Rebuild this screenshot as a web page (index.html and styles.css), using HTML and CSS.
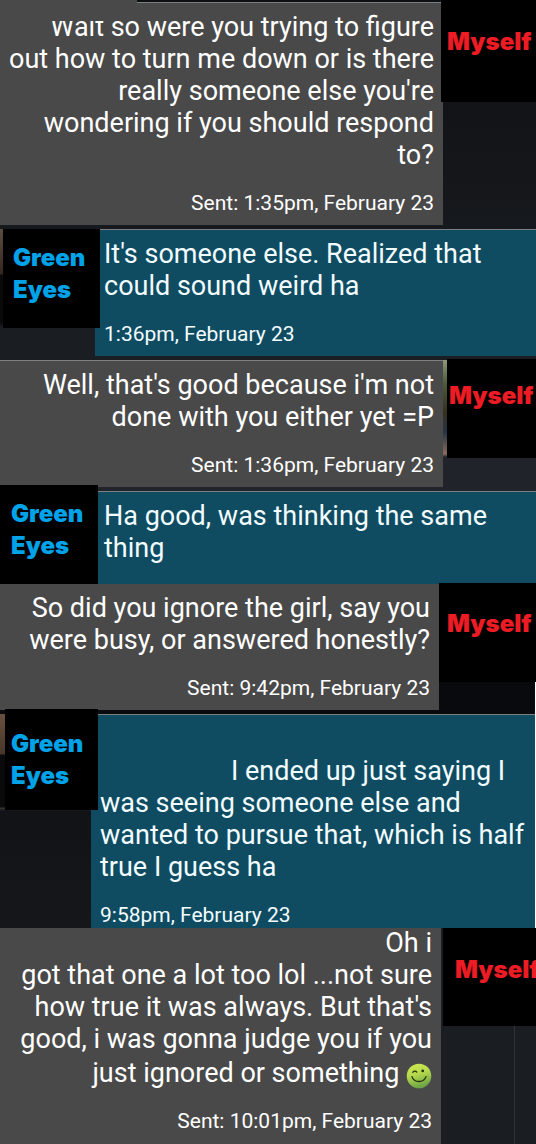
FILE: index.html
```html
<!DOCTYPE html>
<html lang="en">
<head>
<meta charset="utf-8">
<meta name="viewport" content="width=device-width, initial-scale=1">
<title>Conversation</title>
<link rel="stylesheet" href="styles.css">
</head>
<body>
<main class="thread">
  <article class="row sent first">
    <span class="patch"></span>
    <div class="bubble lined">
      <p class="text">Wait so were you trying to figure<br>out how to turn me down or is there<br>really someone else you're<br>wondering if you should respond<br>to?</p>
      <time class="time">Sent: 1:35pm, February 23</time>
    </div>
    <div class="side"><div class="avatar">Myself</div></div>
  </article>

  <article class="row received second">
    <div class="side photo"><div class="avatar">Green<br>Eyes</div></div>
    <div class="bubble lined">
      <p class="text">It's someone else. Realized that<br>could sound weird ha</p>
      <time class="time">1:36pm, February 23</time>
    </div>
  </article>

  <article class="row sent third">
    <div class="bubble lined">
      <p class="text">Well, that's good because i'm not<br>done with you either yet =P</p>
      <time class="time">Sent: 1:36pm, February 23</time>
    </div>
    <div class="side photo"><div class="avatar">Myself</div></div>
  </article>

  <article class="row received fourth">
    <div class="side"><div class="avatar">Green<br>Eyes</div></div>
    <div class="bubble lined">
      <p class="text">Ha good, was thinking the same<br>thing</p>
    </div>
  </article>

  <article class="row sent fifth">
    <div class="bubble">
      <p class="text">So did you ignore the girl, say you<br>were busy, or answered honestly?</p>
      <time class="time">Sent: 9:42pm, February 23</time>
    </div>
    <div class="side"><div class="avatar">Myself</div></div>
  </article>

  <article class="row received sixth">
    <div class="side photo"><div class="avatar">Green<br>Eyes</div></div>
    <div class="bubble lined">
      <p class="text">I ended up just saying I<br>was seeing someone else and<br>wanted to pursue that, which is half<br>true I guess ha</p>
      <time class="time">9:58pm, February 23</time>
    </div>
  </article>

  <article class="row sent seventh">
    <div class="bubble">
      <p class="text">Oh i<br>got that one a lot too lol ...not sure<br>how true it was always. But that's<br>good, i was gonna judge you if you<br>just ignored or something <svg class="wink" viewBox="0 0 26 26" role="img" aria-label="wink">
        <defs><linearGradient id="face" x1="0" y1="0" x2="0.3" y2="1"><stop offset="0" stop-color="#d3ea50"/><stop offset="0.5" stop-color="#b5d94d"/><stop offset="1" stop-color="#6fa544"/></linearGradient></defs>
        <circle cx="13" cy="13" r="12.3" fill="url(#face)"/>
        <path d="M6.8 9.2Q8.7 7.2 10.8 9" fill="none" stroke="#27330f" stroke-width="1.3" stroke-linecap="round"/>
        <circle cx="16.7" cy="7.9" r="1.4" fill="#27330f"/>
        <path d="M6 13.6C8 20.2 17.8 20.2 20 13.6" fill="none" stroke="#27330f" stroke-width="1.4" stroke-linecap="round"/>
      </svg></p>
      <time class="time">Sent: 10:01pm, February 23</time>
    </div>
    <div class="side"><div class="avatar">Myself</div></div>
  </article>
</main>
</body>
</html>
```

FILE: styles.css
```css
* { box-sizing: border-box; }

body {
  margin: 0;
  background: #fff;
  font-family: Roboto, "Noto Sans", sans-serif;
}

.thread { overflow: hidden; }

.row {
  display: flex;
  padding-bottom: 4px;
  background: #15181c;
}

.bubble {
  flex: 1;
  min-width: 0;
  padding: 8px 9px 9px;
  color: #fff;
}

.lined { border-top: 1px solid #7c8080; }

.sent .bubble {
  background: #494949;
  text-align: right;
}

.received .bubble {
  background: #0f4c62;
  color: #f2fcff;
}

.text {
  margin: 0;
  font-size: 27px;
  line-height: 32px;
  white-space: nowrap;
}

.time {
  display: block;
  margin-top: 20px;
  font-size: 21px;
  line-height: 25px;
}

.side {
  position: relative;
  flex: none;
  width: 95px;
}

/* Name plates sit over the contact photos and the bubble edge. */
.avatar {
  position: relative;
  height: 99px;
  background: #000;
  font-family: Inter, "Liberation Sans", sans-serif;
  font-size: 24px;
  font-weight: 900;
  line-height: 32px;
  white-space: nowrap;
}

.sent .avatar { color: #ed1c24; }
.received .avatar { color: #00a2e8; }

.first {
  position: relative;
  padding-top: 2px;
  background: linear-gradient(#0e0f11, #16191d);
}
.first .side { width: 93px; }
.first .avatar {
  height: 102px;
  margin: -2px 0 0 -2px;
  padding: 26px 0 0 6px;
}

.patch {
  position: absolute;
  top: 0;
  left: 0;
  width: 137px;
  height: 21px;
  background: #494949;
}

.second { background: #1a1d22; }
.second .side { background: linear-gradient(#5b4c42, #33271f 45px, #0a0a0b 46px, #0a0a0b 94px, #1a1d22 98px); }
.second .avatar {
  margin: 0 -5px 0 3px;
  padding: 13px 0 0 10px;
}

.third { background: #20232a; }
.third .side {
  width: 93px;
  background: linear-gradient(#8c9878, #4c5a38 24px, #372f20 52px, #243345 72px, #8a6b59 94px, #20232a 97px);
}
.third .avatar {
  margin: -1px 0 0 4px;
  padding: 21px 0 0 2px;
}

.fourth {
  padding-bottom: 0;
  background: #000;
}
.fourth .avatar {
  margin: -6px -3px 0 0;
  padding: 13px 0 0 11px;
}
.fourth .bubble { padding-bottom: 20px; }

.fifth {
  margin-right: 1px;
  background: #090a0d;
}
.fifth .side { width: 96px; }
.fifth .avatar {
  margin: -1px -1px 0 0;
  padding: 25px 0 0 8px;
}

.sixth {
  margin-right: 1px;
  padding-bottom: 0;
  background: linear-gradient(#0d0f11, #15171b);
}
.sixth .side { width: 91px; }
.sixth .photo { background: linear-gradient(#69503d, #46362b 40px, #0a0a0a 41px, #0a0a0a 93px, #393632 94px, transparent 97px); }
.sixth .avatar {
  height: 101px;
  margin: -5px -7px 0 5px;
  padding: 19px 0 0 6px;
}
.sixth .bubble {
  padding-top: 40px;
  padding-bottom: 0;
}
.sixth .text { text-indent: 131px; }

.seventh {
  padding-bottom: 0;
  background: #1a1d21;
}
.seventh .bubble {
  padding-top: 0;
  padding-bottom: 10px;
}
.seventh .text { margin-top: -1px; }
.seventh .side { background: linear-gradient(90deg, transparent 73px, #303338 73px, #303338 74px, transparent 74px); }
.seventh .avatar {
  height: 98px;
  margin-left: 2px;
  padding: 26px 0 0 12px;
}

.wink {
  width: 26px;
  height: 26px;
  margin-top: 8px;
  vertical-align: -7px;
}
```
